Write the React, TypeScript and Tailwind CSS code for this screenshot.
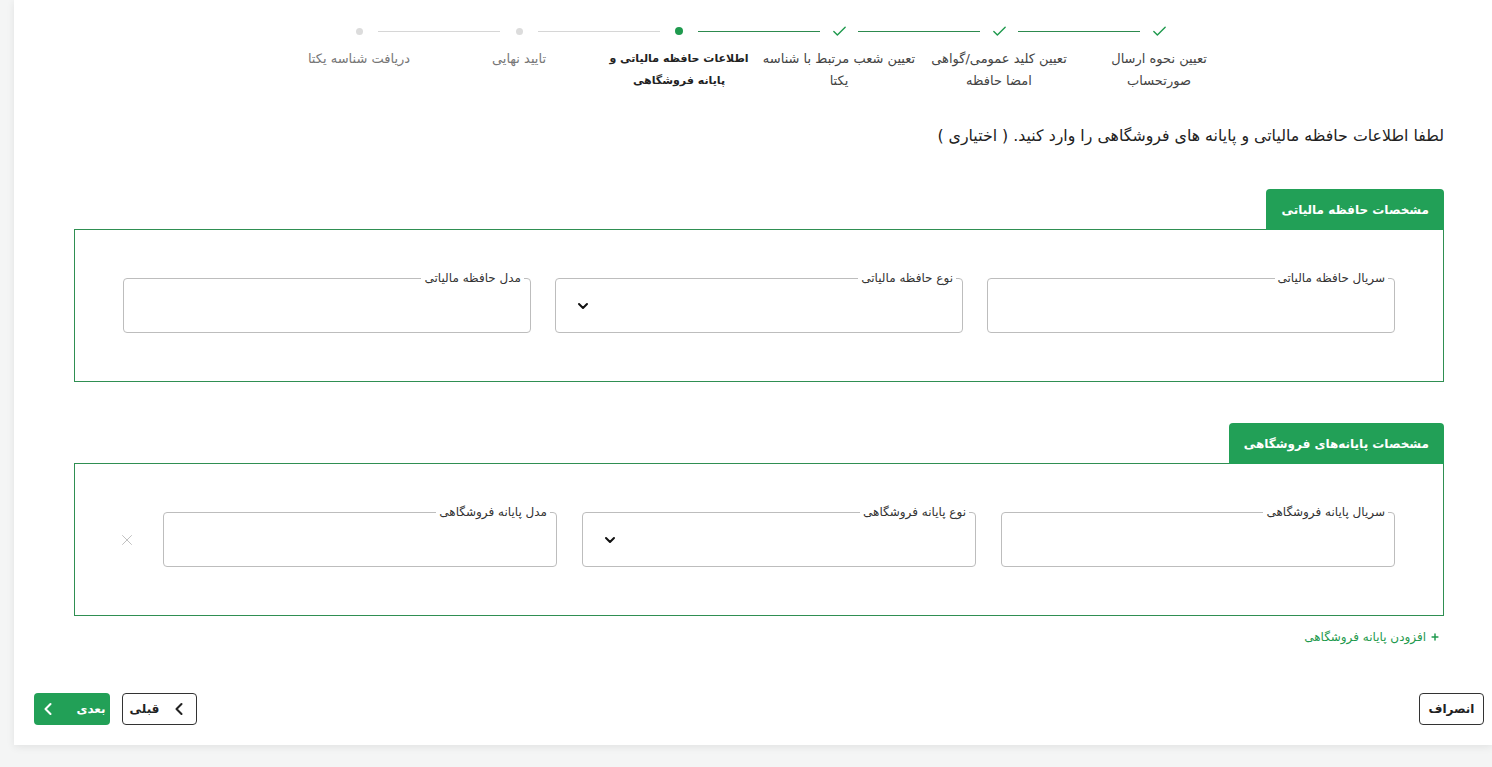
import React from 'react'
import { Check, ChevronDown, ChevronLeft, X, Plus } from 'lucide-react'

type Step = { lines: string[]; state: 'done' | 'current' | 'todo' }

const steps: Step[] = [
  { lines: ['تعیین نحوه ارسال', 'صورتحساب'], state: 'done' },
  { lines: ['تعیین کلید عمومی/گواهی', 'امضا حافظه'], state: 'done' },
  { lines: ['تعیین شعب مرتبط با شناسه', 'یکتا'], state: 'done' },
  { lines: ['اطلاعات حافظه مالیاتی و', 'پایانه فروشگاهی'], state: 'current' },
  { lines: ['تایید نهایی'], state: 'todo' },
  { lines: ['دریافت شناسه یکتا'], state: 'todo' },
]

function StepIcon({ state }: { state: Step['state'] }) {
  return (
    <div className="w-[38px] h-[18px] flex items-center justify-center shrink-0">
      {state === 'done' && <Check className="w-[17px] h-[17px] text-[#1f9a4e]" strokeWidth={2} />}
      {state === 'current' && <span className="w-[8px] h-[8px] rounded-full bg-[#1f9a4e]" />}
      {state === 'todo' && <span className="w-[7px] h-[7px] rounded-full bg-[#dcdcdc]" />}
    </div>
  )
}

function Stepper() {
  return (
    <div className="w-[960px] mx-auto">
      <div className="flex items-center px-[61px]">
        {steps.map((s, i) => (
          <React.Fragment key={i}>
            <StepIcon state={s.state} />
            {i < steps.length - 1 && (
              <div className={`h-px w-[122px] ${steps[i + 1].state === 'todo' ? 'bg-[#d6d6d6]' : 'bg-[#2d8a4e]'}`} />
            )}
          </React.Fragment>
        ))}
      </div>
      <div className="grid grid-cols-6 mt-[8px]">
        {steps.map((s, i) => (
          <div
            key={i}
            className={`text-center leading-[22px] whitespace-nowrap ${
              s.state === 'current'
                ? 'text-[11px] font-bold text-[#222]'
                : s.state === 'done'
                ? 'text-[13px] text-[#444]'
                : 'text-[13px] text-[#777]'
            }`}
          >
            {s.lines.map((l, j) => (
              <div key={j}>{l}</div>
            ))}
          </div>
        ))}
      </div>
    </div>
  )
}

function Field({ label, select }: { label: string; select?: boolean }) {
  return (
    <div className="relative h-[55px] border border-[#bdbdbd] rounded-[4px] bg-white">
      <span className="absolute -top-[8px] right-[6px] bg-white px-[3px] text-[12px] leading-[14px] text-[#333]">
        {label}
      </span>
      {select && (
        <div className="h-full flex items-center justify-end pl-[19px]">
          <ChevronDown className="w-[16px] h-[16px] text-[#111]" strokeWidth={3} />
        </div>
      )}
    </div>
  )
}

function Section({ title, children }: { title: string; children: React.ReactNode }) {
  return (
    <div>
      <div className="flex">
        <div className="h-[41px] px-[15px] flex items-center bg-[#22a057] text-white text-[12px] font-bold rounded-t-[4px]">
          {title}
        </div>
      </div>
      <div className="border border-[#2f8f52] -mt-px">{children}</div>
    </div>
  )
}

export default function App() {
  return (
    <div dir="rtl" className="min-h-screen bg-[#f4f5f5]" style={{ fontFamily: '"DejaVu Sans", sans-serif' }}>
      <div className="ml-[14px] bg-white h-[745px] shadow-[0_2px_8px_rgba(0,0,0,0.08)] flex flex-col">
        <div className="pr-[48px] pl-[60px] pt-[22px]">
          <Stepper />
          <p className="mt-[34px] text-[15.8px] leading-[20px] text-[#222] font-medium">
            لطفا اطلاعات حافظه مالیاتی و پایانه های فروشگاهی را وارد کنید. ( اختیاری )
          </p>

          <div className="mt-[43px]">
            <Section title="مشخصات حافظه مالیاتی">
              <div className="grid grid-cols-3 gap-6 px-[48px] py-[48px]">
                <Field label="سریال حافظه مالیاتی" />
                <Field label="نوع حافظه مالیاتی" select />
                <Field label="مدل حافظه مالیاتی" />
              </div>
            </Section>
          </div>

          <div className="mt-[41px]">
            <Section title="مشخصات پایانه‌های فروشگاهی">
              <div className="flex items-center pr-[48px] pl-[43px] py-[48px]">
                <div className="flex-1 grid grid-cols-3 gap-[25px]">
                  <Field label="سریال پایانه فروشگاهی" />
                  <Field label="نوع پایانه فروشگاهی" select />
                  <Field label="مدل پایانه فروشگاهی" />
                </div>
                <button className="mr-[27px] w-[18px] h-[18px] flex items-center justify-center text-[#bdbdbd]">
                  <X className="w-[18px] h-[18px]" strokeWidth={1.25} />
                </button>
              </div>
            </Section>
          </div>

          <div className="mt-[12px] flex">
            <button className="flex items-center gap-[4px] text-[12px] text-[#1f9a4e] font-medium mr-[4px]">
              <Plus className="w-[10px] h-[10px]" strokeWidth={3.5} />
              افزودن پایانه فروشگاهی
            </button>
          </div>
        </div>

        <div className="mt-[47px] flex items-center justify-between pr-[8px] pl-[20px]">
          <button className="h-[32px] w-[65px] border border-[#333] rounded-[4px] text-[12px] font-bold text-[#222] bg-white">
            انصراف
          </button>
          <div className="flex items-center gap-[12px]">
            <button className="h-[32px] w-[75px] border border-[#333] rounded-[4px] bg-white flex items-center justify-center gap-[10px] text-[12px] font-bold text-[#222]">
              <ChevronLeft className="w-[20px] h-[20px] rotate-180 -scale-x-100" strokeWidth={2.5} />
              قبلی
            </button>
            <button className="h-[32px] w-[76px] rounded-[4px] bg-[#22a057] flex items-center justify-center gap-[18px] text-[12px] font-bold text-white">
              بعدی
              <ChevronLeft className="w-[20px] h-[20px]" strokeWidth={2.5} />
            </button>
          </div>
        </div>
      </div>
    </div>
  )
}
